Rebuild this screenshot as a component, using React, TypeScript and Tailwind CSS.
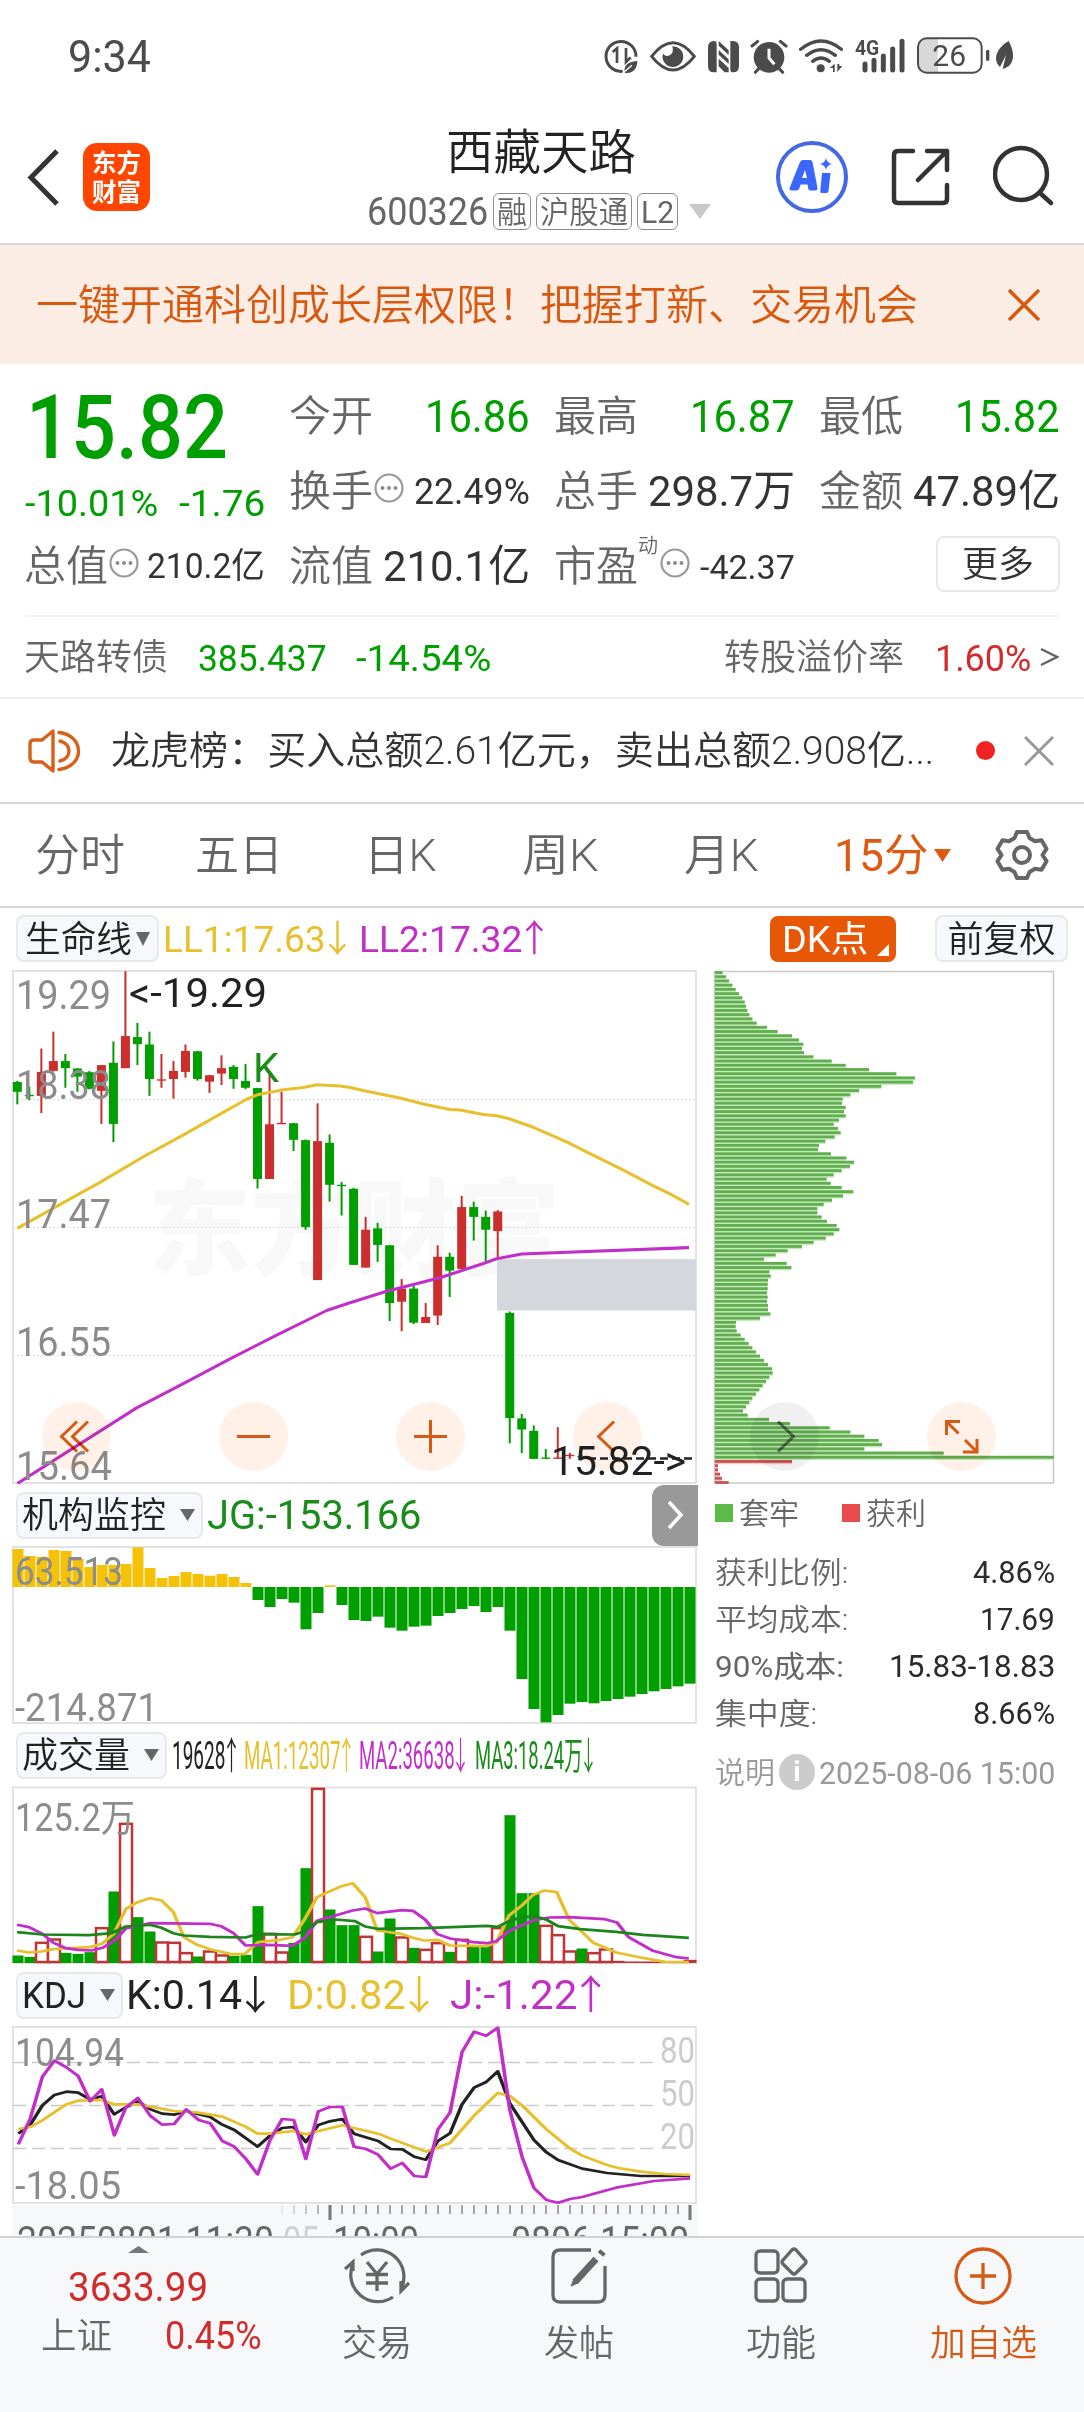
import { useLayoutEffect, useRef, useState, type ReactNode } from "react";

/* Single line of text, condensed or widened to fill the width of its box.
   Figures and Latin text are set one step heavier than Chinese labels. */
function Fit({ className = "", children }: { className?: string; children: ReactNode }) {
  const box = useRef<HTMLSpanElement>(null);
  const inner = useRef<HTMLSpanElement>(null);
  const [k, setK] = useState(1);
  useLayoutEffect(() => {
    if (box.current && inner.current && inner.current.offsetWidth) {
      setK(box.current.clientWidth / inner.current.offsetWidth);
    }
  }, [children]);
  const first = Array.isArray(children) ? children[0] : children;
  const latin = typeof first === "string" && /^[-\dA-Z]/.test(first);
  return (
    <span ref={box} className={`block shrink-0 whitespace-nowrap pt-[2px] leading-none ${className}`}>
      <span
        ref={inner}
        className={`inline-block origin-left align-top leading-none ${latin && !className.includes("font-") ? "font-normal" : ""}`}
        style={{ transform: `scaleX(${k})` }}
      >
        {children}
      </span>
    </span>
  );
}

/* Trend arrow after an indicator value, tightened to the width of a digit. */
function Arrow({ down }: { down?: boolean }) {
  return <span className="-ml-[0.18em] -mr-[0.2em] font-['Noto_Sans_CJK_SC'] leading-[0] font-[350]">{down ? "↓" : "↑"}</span>;
}

const GREEN = "#009f00";
const RED = "#cc2d2d";
const YELLOW = "#e8c02e";
const PURPLE = "#c22fc8";

function StatusBar() {
  return (
    <div className="flex h-[110px] shrink-0 items-start justify-between pl-[68px] pr-[65px] pt-[36px] text-[#4b4b4b]">
      <Fit className="mt-[-3px] w-[83px] text-[44px]">9:34</Fit>
      <svg className="h-[38px] w-[417px]" viewBox="66 48 1251 114" fill="#4b4b4b">
        <g fill="none" stroke="#4b4b4b" strokeWidth="9">
          <path d="M128 154a45 45 0 1 1 40-44" />
          <path d="M98 96l13-11v44M138 84v42l14-14" strokeWidth="8" />
        </g>
        <path d="M134 158c-4-24 14-34 38-35 0 22-14 40-38 35z" />
        <path d="M128 160l28-24" stroke="#fff" strokeWidth="4" />
        <path d="M215 109q64-82 128 0-64 82-128 0z" fill="none" stroke="#4b4b4b" strokeWidth="9" />
        <path d="M277 79a31 31 0 1 1-28 22q9 10 20 5 14-7 8-27z" />
        <path d="M402 63c6 0 8 4 8 8v86h-8q-18 0-18-20V83q0-20 18-20zM459 157c-6 0-8-4-8-8V63h8q18 0 18 20v54q0 20-18 20z" />
        <path d="M416 63l30 28v14l-30-28zM416 90l30 28v14l-30-28zM416 116l30 28v13h-12l-18-18z" />
        <circle cx="567" cy="112" r="46" />
        <path d="M567 86v28l16 19" fill="none" stroke="#fff" strokeWidth="9" />
        <path d="M516 78l17-14M618 78l-17-14M536 146l-10 11M598 146l10 11" stroke="#4b4b4b" strokeWidth="9" strokeLinecap="round" />
        <g fill="none" stroke="#4b4b4b" strokeWidth="10" strokeLinecap="round">
          <path d="M662 88q61-50 122 0M680 106q43-34 86 0M698 124q25-20 50 0" />
        </g>
        <circle cx="722" cy="145" r="12" />
        <path d="M749 144l15-13v25h-5v-12zM772 132v24l15-18h-9v-6z" />
        <text x="825" y="105" fontSize="62" fontWeight="700" textLength="73" lengthAdjust="spacingAndGlyphs">4G</text>
        <g stroke="#4b4b4b" strokeWidth="15" strokeLinecap="round">
          <path d="M855 132v18M882 121v29M910 108v42M938 87v63M966 64v86" />
        </g>
        <path d="M1074 57h-38q-20 0-20 20v60q0 20 20 20h38z" fill="#d8d8d8" />
        <rect x="1014" y="55" width="191" height="103" rx="26" fill="none" stroke="#4b4b4b" strokeWidth="6" />
        <text x="1057" y="138" fontSize="90" fontWeight="400" textLength="101" lengthAdjust="spacingAndGlyphs">26</text>
        <path d="M1223 94v24" stroke="#4b4b4b" strokeWidth="10" strokeLinecap="round" />
        <path d="M1286 63c20 36 20 74-18 84l10-42-18 36c-28-28 0-64 26-78z" />
      </svg>
    </div>
  );
}

function Tag({ children, className }: { children: ReactNode; className: string }) {
  return (
    <span className="flex h-[37px] items-center rounded-[6px] border-[1.5px] border-[#8c8c8c] px-[3px]">
      <Fit className={`text-[31px] ${className}`}>{children}</Fit>
    </span>
  );
}

function Header() {
  return (
    <header className="flex h-[135px] shrink-0 items-start border-b-2 border-[#d6d6d6]">
      <svg className="ml-[26px] mt-[39px] h-[57px] w-[35px]" viewBox="0 0 35 57" fill="none" stroke="#333" strokeWidth="5">
        <path d="M31 2L5 28.500L31 55" />
      </svg>
      <div className="ml-[22px] mt-[33px] flex h-[68px] w-[67px] flex-col items-center justify-center gap-[2px] rounded-[14px] bg-[#ff4500] text-[25px] font-bold text-white">
        <Fit className="w-[49px]">东方</Fit>
        <Fit className="w-[49px]">财富</Fit>
      </div>
      <div className="ml-[217px] flex w-[346px] flex-col items-center pt-[17px]">
        <Fit className="mr-[-2px] w-[190px] text-[48px] text-[#222]">西藏天路</Fit>
        <div className="mt-[14px] flex items-center gap-[5px] self-start text-[#666]">
          <Fit className="w-[121px] text-[38px]">600326</Fit>
          <Tag className="w-[30px]">融</Tag>
          <Tag className="w-[88px]">沪股通</Tag>
          <Tag className="w-[33px]">L2</Tag>
          <svg className="ml-[6px] h-[15px] w-[22px]" viewBox="0 0 22 15" fill="#c8c8c8"><path d="M0 0h22L11 15z" /></svg>
        </div>
      </div>
      <svg className="ml-[63px] mt-[31px] h-[72px] w-[72px]" viewBox="0 0 72 72">
        <circle cx="36" cy="36" r="34" fill="none" stroke="#4268e6" strokeWidth="4" />
        <path d="M24 21q1-2 3-2h7q2 0 2.500 2l5 26q0 2.500-2 2.500h-5q-2 0-2.300-2l-.6-4h-7l-1.300 4q-.7 2-3 2h-5q-2.500-.5-1.500-3zm5 8l-3 8h5z" fill="#3b67ff" fillRule="evenodd" />
        <path d="M46 32h8.500l-2 18q-.2 2-2 2h-4q-2.500 0-2.200-2zM50 17q1 5 6 6-5 1-6 6-1-5-6-6 5-1 6-6z" fill="#3b67ff" />
      </svg>
      <svg className="ml-[42px] mt-[37px] h-[60px] w-[60px]" viewBox="0 0 60 60" fill="none" stroke="#333" strokeWidth="4.500" strokeLinecap="round" strokeLinejoin="round">
        <path d="M23 4H8q-4 0-4 4v44q0 4 4 4h45q4 0 4-4V38M37 4h20v19M57 4L28 33" />
      </svg>
      <svg className="ml-[43px] mt-[35px] h-[64px] w-[64px]" viewBox="0 0 64 64" fill="none" stroke="#333" strokeWidth="4.500" strokeLinecap="round">
        <circle cx="28" cy="29" r="26" /><path d="M47 48l11 10" />
      </svg>
    </header>
  );
}

function Banner() {
  return (
    <div className="flex h-[119px] shrink-0 items-center justify-between bg-[#fcede4] pl-[36px] pr-[44px] text-[#d8580f]">
      <Fit className="w-[882px] text-[42px]">一键开通科创成长层权限！把握打新、交易机会</Fit>
      <svg className="size-[32px]" viewBox="0 0 32 32" stroke="currentColor" strokeWidth="3.500"><path d="M1 1l30 30M31 1L1 31" /></svg>
    </div>
  );
}

function Dots() {
  return (
    <svg className="mt-[-5px] size-[30px] shrink-0" viewBox="0 0 30 30">
      <circle cx="15" cy="15" r="13.500" fill="none" stroke="#999" strokeWidth="2.200" />
      <g fill="#8c8c8c"><circle cx="8.500" cy="15" r="2" /><circle cx="15" cy="15" r="2" /><circle cx="21.500" cy="15" r="2" /></g>
    </svg>
  );
}

function Cell({ label, mark, dots, value, className }: { label: string; mark?: string; dots?: boolean; value: string; className: string }) {
  return (
    <div className="flex h-[75px] items-center justify-between">
      <div className="relative flex items-center text-[42px] text-[#666]">
        <Fit className="ml-[-1px] w-[84px]">{label}</Fit>
        {mark && <span className="absolute left-[83px] top-[-8px] text-[20px] leading-none">{mark}</span>}
        {dots && <span className={mark ? "ml-[22px]" : "ml-px"}><Dots /></span>}
      </div>
      <Fit className={className}>{value}</Fit>
    </div>
  );
}

function Quote() {
  return (
    <section className="flex h-[335px] shrink-0 flex-col border-b-2 border-[#ededed] px-[25px] pt-[14px]">
      <div className="grid h-[237px] grid-cols-[240px_240px_240px_240px] grid-rows-[75px_75px_75px] gap-x-[25px]">
        <div className="row-span-2 flex flex-col pt-[3px] text-[#009f00]">
          <Fit className="ml-[1px] w-[202px] text-[89px] font-medium">15.82</Fit>
          <div className="mt-[11px] flex justify-between text-[37px]">
            <Fit className="w-[133px]">-10.01%</Fit>
            <Fit className="w-[86px]">-1.76</Fit>
          </div>
        </div>
        <Cell label="今开" value="16.86" className="w-[105px] text-[44px] text-[#009f00]" />
        <Cell label="最高" value="16.87" className="w-[105px] text-[44px] text-[#009f00]" />
        <Cell label="最低" value="15.82" className="w-[105px] text-[44px] text-[#009f00]" />
        <Cell label="换手" dots value="22.49%" className="w-[116px] text-[36px] text-[#333]" />
        <Cell label="总手" value="298.7万" className="w-[147px] text-[43px] text-[#333]" />
        <Cell label="金额" value="47.89亿" className="w-[147px] text-[43px] text-[#333]" />
        <Cell label="总值" dots value="210.2亿" className="w-[118px] text-[35px] text-[#333]" />
        <Cell label="流值" value="210.1亿" className="w-[147px] text-[43px] text-[#333]" />
        <Cell label="市盈" mark="动" dots value="-42.37" className="w-[95px] text-[34px] text-[#333]" />
        <div className="flex items-center justify-end pb-[3px]">
          <div className="flex h-[56px] w-[124px] items-center justify-center rounded-[8px] border-2 border-[#e8e8e8] text-[#333]">
            <Fit className="w-[72px] text-[36px]">更多</Fit>
          </div>
        </div>
      </div>
      <div className="flex h-[82px] items-center border-t-2 border-[#f3f3f3] text-[36px]">
        <Fit className="ml-[-1px] w-[144px] text-[#666]">天路转债</Fit>
        <Fit className="ml-[30px] w-[129px] text-[37px] text-[#009f00]">385.437</Fit>
        <Fit className="ml-[29px] w-[135px] text-[37px] text-[#009f00]">-14.54%</Fit>
        <Fit className="ml-auto w-[180px] text-[#666]">转股溢价率</Fit>
        <Fit className="ml-[31px] w-[96px] text-[37px] text-[#d02c2c]">1.60%</Fit>
        <svg className="ml-[9px] h-[20px] w-[19px]" viewBox="0 0 19 20" fill="none" stroke="#666" strokeWidth="2.500"><path d="M1 2l16 8-16 8" /></svg>
      </div>
    </section>
  );
}

function News() {
  return (
    <section className="flex h-[105px] shrink-0 items-center border-b-2 border-[#d6d6d6] pl-[28px] pr-[30px]">
      <svg className="h-[44px] w-[54px]" viewBox="0 0 54 44" fill="none" stroke="#d8611a" strokeWidth="3.400" strokeLinejoin="round">
        <path d="M25 2L14 11H6q-4 0-4 4v14q0 4 4 4h8l11 9z" />
        <path d="M31 3.500c26 3 26 34 0 37M32 12c12 3 12 17 0 20" strokeLinecap="round" />
      </svg>
      <Fit className="ml-[29px] w-[823px] text-[39px] text-[#333]">龙虎榜：买入总额2.61亿元，卖出总额2.908亿...</Fit>
      <span className="ml-[42px] size-[19px] rounded-full bg-[#f02222]" />
      <svg className="ml-auto size-[30px]" viewBox="0 0 30 30" stroke="#999" strokeWidth="3"><path d="M1 1l28 28M29 1L1 29" /></svg>
    </section>
  );
}

function Tabs() {
  return (
    <nav className="flex h-[104px] shrink-0 items-center border-b-2 border-[#d6d6d6] pl-[35px] text-[44px] text-[#666]">
      <Fit className="w-[90px]">分时</Fit>
      <Fit className="ml-[70px] w-[88px]">五日</Fit>
      <Fit className="ml-[81px] w-[73px]">日K</Fit>
      <Fit className="ml-[85px] w-[77px]">周K</Fit>
      <Fit className="ml-[85px] w-[75px]">月K</Fit>
      <Fit className="ml-[75px] w-[94px] text-[#dd5a10]">15分</Fit>
      <svg className="ml-[6px] h-[13px] w-[17px]" viewBox="0 0 17 13" fill="#dd5a10"><path d="M0 0h17L8.500 13z" /></svg>
      <svg className="ml-[44px] h-[52px] w-[54px]" viewBox="0 0 54 52" fill="none" stroke="#666" strokeWidth="4" strokeLinejoin="round">
        <path d="M22 3h10l2.500 6 5.500 3.200 6.500-1 5 8.600L47.500 26l4 6.200-5 8.600-6.500-1-5.500 3.200L32 49H22l-2.500-6-5.500-3.200-6.500 1-5-8.600 4-6.200-4-6.200 5-8.600 6.500 1L19.500 9z" />
        <circle cx="27" cy="26" r="8" />
      </svg>
    </nav>
  );
}

function Picker({ className, label, tight }: { className: string; label: string; tight?: boolean }) {
  return (
    <div className={`flex h-[47px] shrink-0 items-center rounded-[8px] border-2 border-[#e6e8ec] bg-[#f7f8fb] text-[36px] text-[#222] ${tight ? "pl-[7px] pr-[7px]" : "px-[4px]"}`}>
      <Fit className={className}>{label}</Fit>
      <svg className={tight ? "ml-[4px] h-[14px] w-[14px]" : "ml-[14px] mr-[2px] h-[12px] w-[15px]"} viewBox="0 0 15 12" preserveAspectRatio="none" fill="#666"><path d="M0 0h15L7.500 12z" /></svg>
    </div>
  );
}

/* x centre step is 12; each entry: colour, high, body top, body bottom, low */
const candles: [string, number, number, number, number][] = [
  ["g", 358, 361, 390, 427], ["g", 375, 399, 402, 415], ["r", 262, 331, 402, 453], ["r", 212, 299, 328, 330],
  ["g", 278, 299, 320, 378], ["g", 320, 321, 345, 390], ["g", 328, 332, 381, 383], ["r", 311, 311, 387, 485],
  ["g", 241, 304, 485, 539], ["r", 33, 225, 320, 320], ["g", 186, 228, 249, 311], ["g", 212, 250, 352, 402],
  ["r", 278, 353, 356, 378], ["r", 299, 328, 352, 410], ["r", 250, 269, 331, 348], ["g", 269, 270, 352, 357],
  ["r", 340, 341, 360, 393], ["r", 282, 320, 336, 370], ["g", 311, 316, 352, 381], ["g", 308, 358, 378, 382],
  ["g", 378, 379, 648, 676], ["r", 330, 486, 648, 648], ["r", 390, 482, 485, 485], ["g", 482, 483, 532, 565],
  ["g", 531, 533, 790, 798], ["r", 424, 536, 947, 947], ["g", 516, 541, 665, 715], ["g", 657, 665, 668, 756],
  ["g", 674, 677, 902, 902], ["r", 760, 798, 910, 910], ["g", 778, 794, 843, 893], ["g", 843, 844, 1015, 1068],
  ["r", 944, 972, 1011, 1098], ["g", 963, 972, 1073, 1077], ["r", 1015, 1056, 1074, 1074], ["r", 844, 878, 1052, 1080],
  ["g", 866, 878, 919, 997], ["r", 698, 731, 914, 914], ["g", 715, 731, 760, 830], ["g", 741, 760, 798, 893],
  ["r", 740, 744, 802, 885], ["g", 1040, 1044, 1355, 1430], ["g", 1343, 1356, 1389, 1459], ["g", 1377, 1393, 1476, 1476],
  ["g", 1447, 1472, 1475, 1475], ["r", 1382, 1472, 1475, 1475], ["r", 1458, 1464, 1467, 1476], ["g", 1463, 1468, 1472, 1476],
];

function AxisText({ x, y, w, children, fill = "#8c8c8c", size = 40 }: { x: number; y: number; w: number; children: string; fill?: string; size?: number }) {
  return (
    <text x={x} y={y} fontSize={size} fill={fill} fontWeight="400" textLength={w} lengthAdjust="spacingAndGlyphs">
      {children}
    </text>
  );
}

function PriceChart() {
  return (
    <svg className="block h-[514px] w-[686px] shrink-0" viewBox="12 970 686 514">
      <text x="148" y="1267" fontSize="104" fontWeight="900" fill="#f8f8f8" textLength="412" lengthAdjust="spacingAndGlyphs">东方财富</text>
      <rect x="13" y="971" width="683" height="512" fill="none" stroke="#e2e2e2" strokeWidth="2" />
      <path d="M13 1099.500H696M13 1227.500H696M13 1355.500H696" stroke="#ddd" strokeDasharray="2 2" />
      <g transform="translate(0 960) scale(.33333 .338)">
        {candles.map(([c, hi, top, bot, lo], i) => {
          const x = 52 + i * 36.03;
          const color = c === "g" ? GREEN : RED;
          return (
            <g key={i} fill={color}>
              <rect x={x - 3} y={hi} width="6" height={Math.max(lo - hi, 3)} />
              <rect x={x - 13.5} y={top} width="27" height={Math.max(bot - top, 4)} />
            </g>
          );
        })}
        <rect x="1491" y="885" width="597" height="152" fill="#d4d7dc" />
        <g fill="none" strokeWidth="9" strokeLinejoin="round">
          <path stroke={YELLOW} d="M52 794L190 718L300 658L430 582L560 512L680 445L740 412L772 399L850 384L910 377L950 369L1020 373L1050 377L1100 388L1200 408L1270 426L1350 442L1380 444L1450 457L1490 461L1525 469L1600 495L1700 538L1770 573L1870 622L1960 668L2010 692L2067 723" />
          <path stroke={PURPLE} d="M52 1549L410 1325L560 1248L690 1180L830 1110L980 1037L1050 1014L1160 980L1320 940L1450 898L1490 884L1565 870L2067 851" />
        </g>
      </g>
      <AxisText x={16} y={1009} w={95}>19.29</AxisText>
      <AxisText x={16} y={1098.500} w={95}>18.38</AxisText>
      <AxisText x={16} y={1228} w={95}>17.47</AxisText>
      <AxisText x={16} y={1356} w={95}>16.55</AxisText>
      <AxisText x={16} y={1480} w={96}>15.64</AxisText>
      <AxisText x={129} y={1007} w={138} fill="#222">{"<-19.29"}</AxisText>
      <AxisText x={253} y={1082} w={26} fill="#1a8c1a">K</AxisText>
      <path d="M588 1458.500H694" stroke="#222" strokeWidth="2.500" strokeDasharray="8 4" />
      <AxisText x={551} y={1475} w={135} fill="#222">{"15.82->"}</AxisText>
    </svg>
  );
}

const chips = [
  68, 78, 87, 97, 107, 117, 127, 134, 138, 142, 148, 157, 170, 201, 233, 276, 297, 310, 306, 312, 340, 395, 437, 507, 589,
  645, 639, 544, 477, 451, 428, 426, 437, 432, 437, 417, 401, 414, 422, 404, 376, 357, 354, 393, 439, 462, 450, 425, 401,
  380, 392, 425, 460, 429, 396, 371, 352, 352, 365, 381, 410, 418, 401, 377, 341, 306, 263, 227, 192, 260, 274, 208, 212,
  204, 203, 203, 201, 203, 201, 204, 204, 211, 180, 108, 107, 110, 122, 134, 146, 157, 168, 180, 192, 204, 216, 218, 208,
  198, 188, 178, 168, 157, 148, 138, 129, 143, 207, 270, 389, 451, 493, 536, 546, 493, 731, 1062, 276, 54, 54, 60, 66, 86,
];

function ChipChart() {
  return (
    <svg className="block h-[514px] w-[342px]" viewBox="713 970 342 514">
      <rect x="714.500" y="971.500" width="339" height="511.500" fill="none" stroke="#c8c8c8" strokeWidth="1.500" />
      {chips.map((x, i) => (
        <g key={i}>
          <rect x="715" y={971.1 + i * 4.215} width={(x - 45) / 3} height="4.200" fill={i > 115 ? "#f7c9c9" : "#c3ecb9"} />
          <rect x="715" y={971.1 + i * 4.215} width={(x - 45) / 3} height="2.800" fill={i > 115 ? "#c95454" : "#62ad50"} />
        </g>
      ))}
    </svg>
  );
}

const flow = [
  207, 228, 230, 210, 213, 237, 261, 255, 255, 252, 202, 264, 294, 288, 276, 282, 287, 282, 291, 309, 360, 381, 357, 368,
  448, 399, 316, 375, 420, 423, 410, 443, 452, 440, 437, 408, 399, 387, 378, 396, 381, 452, 597, 687, 727, 705, 671, 666,
  670, 663, 657, 650, 642, 634, 627, 619, 611,
];

function FlowChart() {
  return (
    <svg className="block h-[178px] w-[686px] shrink-0" viewBox="12 1546 686 178">
      <rect x="13" y="1547" width="683" height="176" fill="none" stroke="#e2e2e2" strokeWidth="2" />
      {flow.map((v, i) => {
        const y = 1480 + v / 3;
        return v < 321 ? (
          <rect key={i} x={12.5 + i * 12} y={y} width="11" height={1587 - y} fill="#f5c208" />
        ) : (
          <rect key={i} x={12.5 + i * 12} y="1587" width="11" height={y - 1587} fill={GREEN} />
        );
      })}
      <AxisText x={15} y={1585} w={108} size={38}>63.513</AxisText>
      <AxisText x={15} y={1721} w={143} size={38}>-214.871</AxisText>
    </svg>
  );
}

const volume: [string, number][] = [
  ["g", 555], ["g", 559], ["r", 514], ["r", 504], ["g", 547], ["g", 550], ["g", 545], ["r", 470], ["g", 363], ["r", 157],
  ["g", 440], ["g", 483], ["r", 513], ["r", 514], ["r", 545], ["g", 558], ["r", 540], ["r", 552], ["g", 556], ["g", 553],
  ["g", 407], ["r", 487], ["r", 543], ["g", 517], ["g", 293], ["r", 52], ["g", 417], ["g", 464], ["g", 464], ["r", 496],
  ["g", 543], ["g", 444], ["r", 498], ["g", 532], ["r", 535], ["r", 515], ["g", 544], ["r", 505], ["g", 525], ["g", 525],
  ["r", 470], ["g", 134], ["g", 368], ["g", 368], ["r", 463], ["r", 491], ["r", 540], ["g", 534], ["r", 545], ["r", 534],
  ["r", 571], ["r", 573], ["r", 573], ["r", 573], ["r", 573], ["r", 573], ["r", 568],
];

function VolumeChart() {
  return (
    <svg className="block h-[178px] w-[686px] shrink-0" viewBox="12 1785.500 686 178">
      <rect x="13" y="1787" width="683" height="175.500" fill="none" stroke="#e2e2e2" strokeWidth="2" />
      {volume.map(([c, v], i) => {
        const y = 1770 + v / 3;
        const h = 1962.5 - y;
        if (c === "g") return <rect key={i} x={12.5 + i * 12} y={y} width="11" height={h} fill={GREEN} />;
        if (h < 4) return <rect key={i} x={11.5 + i * 12} y={y} width="13" height={h} fill="#bf3434" />;
        return <rect key={i} x={12 + i * 12} y={y + 1} width="12" height={h - 2} fill="#fff" stroke="#bf3434" strokeWidth="2.500" />;
      })}
      <AxisText x={15} y={1830} w={120} size={38}>125.2万</AxisText>
      <g transform="translate(0 1770) scale(.44643 .33333)" fill="none" strokeWidth="8" strokeLinejoin="round">
        <path stroke={YELLOW} d="M38 540L65 546L92 543L120 536L200 530L228 520L255 490L282 415L308 395L335 383L362 390L388 424L412 500L440 522L470 536L520 551L548 551L578 515L628 508L655 500L683 445L710 380L765 347L790 338L818 380L845 480L900 490L925 502L950 510L980 508L1008 525L1090 527L1112 516L1140 435L1168 406L1194 373L1220 360L1247 365L1275 448L1302 482L1328 516L1380 546L1435 561L1490 574L1543 575" />
        <path stroke={PURPLE} d="M38 463L65 470L95 490L120 517L147 533L175 538L205 540L230 532L255 512L282 474L335 458L470 460L495 467L522 487L550 525L600 523L655 526L683 502L710 451L790 420L818 414L845 428L900 419L925 421L952 447L980 491L1008 504L1060 515L1090 518L1112 512L1140 482L1194 450L1230 441L1275 440L1355 446L1382 456L1408 500L1463 541L1515 560L1543 564" />
        <path stroke="#1c861c" d="M38 485L95 492L200 494L250 488L282 468L335 463L362 472L388 488L412 495L470 499L550 501L578 491L660 492L683 482L710 455L750 447L795 452L818 468L845 475L950 473L1090 466L1115 469L1140 452L1168 440L1200 438L1225 448L1250 467L1300 476L1380 484L1440 493L1543 502" />
      </g>
    </svg>
  );
}

function KdjChart() {
  return (
    <svg className="block h-[178px] w-[686px] shrink-0" viewBox="12 2026 686 178">
      <rect x="13" y="2027" width="683" height="176" fill="none" stroke="#e2e2e2" strokeWidth="2" />
      <path d="M13 2062.500H656M13 2105.500H656M13 2148.500H656" stroke="#ccc" strokeWidth="1.500" strokeDasharray="13 6" />
      <AxisText x={660} y={2062.500} w={35} size={36} fill="#ccc">80</AxisText>
      <AxisText x={660} y={2105.500} w={35} size={36} fill="#ccc">50</AxisText>
      <AxisText x={660} y={2148.500} w={35} size={36} fill="#ccc">20</AxisText>
      <AxisText x={15} y={2066} w={109} size={38}>104.94</AxisText>
      <AxisText x={15} y={2199} w={106} size={38}>-18.05</AxisText>
      <g transform="translate(0 1960) scale(.44643 .33333)" fill="none" strokeWidth="8" strokeLinejoin="round">
        <path stroke="#222" d="M41 521L68 494L95 436L122 405L149 395L175 398L202 418L228 409L256 463L282 442L309 424L337 448L363 461L390 464L417 454L471 471L498 494L525 510L577 560L605 527L632 504L658 501L685 546L713 495L739 484L767 477L793 521L847 543L875 567L901 568L928 590L954 599L981 543L1008 520L1035 433L1062 383L1089 366L1115 334L1142 430L1196 540L1224 577L1250 600L1304 626L1360 639L1435 648L1546 648" />
        <path stroke={YELLOW} d="M41 507L68 501L95 481L149 433L175 422L228 420L256 433L309 433L390 453L440 457L498 470L550 500L577 521L605 521L658 513L685 523L767 496L847 521L875 536L954 575L1008 549L1062 467L1115 399L1142 408L1170 437L1224 508L1277 566L1304 587L1360 615L1385 624L1435 635L1490 642L1546 645" />
        <path stroke={PURPLE} d="M41 553L68 475L95 350L122 302L149 322L175 348L202 424L228 388L256 526L282 442L309 414L337 468L363 494L390 492L417 448L445 480L471 490L498 543L525 560L551 597L577 643L605 540L632 477L658 480L685 597L713 454L739 441L767 441L793 560L820 567L847 584L875 626L901 609L928 648L954 651L981 508L1008 458L1035 276L1062 215L1089 227L1115 203L1142 450L1170 593L1196 684L1224 720L1250 728L1277 717L1304 711L1380 683L1465 663L1546 655" />
      </g>
    </svg>
  );
}

function TimeAxis() {
  return (
    <svg className="mt-px block h-[31px] w-[686px] shrink-0" viewBox="12 2205 686 31">
      <rect x="12" y="2205" width="686" height="31" fill="#f7f8fa" />
      {Array.from({ length: 35 }, (_, i) => {
        const big = i === 4 || i === 34;
        return (
          <rect key={i} x={282 + i * 12 - (big ? 1.5 : 0.75)} y="2205" width={big ? 3 : 1.5} height={big ? 15 : 9} fill={big ? "#777" : "#888"} opacity={i < 4 ? 0.2 + i * 0.2 : 1} />
        );
      })}
      <AxisText x={17} y={2254} w={257} size={38} fill="#666">20250801 11:30</AxisText>
      <AxisText x={283} y={2254} w={36} size={38} fill="#d0d0d0">05</AxisText>
      <AxisText x={333} y={2254} w={86} size={38} fill="#666">10:00</AxisText>
      <AxisText x={511} y={2254} w={178} size={38} fill="#666">0806 15:00</AxisText>
    </svg>
  );
}

function RoundButtons() {
  const shapes: [string, string, string][] = [
    ["bg-[#fff0e8]", "#d55a16", "M35 19.500L19.500 34.500L35 49.500M46 19.500L30.500 34.500L46 49.500"],
    ["bg-[#fff0e8]", "#d55a16", "M18 34.500H51"],
    ["bg-[#fff0e8]", "#d55a16", "M18 34.500H51M34.500 18V51"],
    ["bg-[#fff0e8]", "#d55a16", "M41 19.500L25.500 34.500L41 49.500"],
    ["bg-[#f0f0f0]", "#7d7d7d", "M28 19.500L43.500 34.500L28 49.500"],
    ["bg-[#fff0e8]", "#d55a16", "M33 19.500H19.500V33M19.500 19.500L31.500 31.500M50 37V50H36M50 50L38 38"],
  ];
  return (
    <div className="absolute left-[42px] top-[433px] flex gap-[108px] mix-blend-multiply">
      {shapes.map(([bg, color, d], i) => (
        <div key={i} className={`size-[69px] rounded-full ${bg}`}>
          <svg className="size-[69px]" viewBox="0 0 69 69" fill="none" stroke={color} strokeWidth="3"><path d={d} /></svg>
        </div>
      ))}
    </div>
  );
}

function StatRow({ label, lw, value, vw }: { label: string; lw: string; value: string; vw: string }) {
  return (
    <div className="flex h-[47px] items-center justify-between">
      <Fit className={`text-[30px] text-[#666] ${lw}`}>{label}</Fit>
      <Fit className={`text-[31px] text-[#2b2b2b] ${vw}`}>{value}</Fit>
    </div>
  );
}

function Charts() {
  return (
    <main className="relative flex h-[1328px] shrink-0 flex-col overflow-hidden">
      <div className="flex h-[61px] shrink-0 items-center pl-[16px] pr-[16px]">
        <Picker label="生命线" className="w-[107px]" tight />
        <Fit className="ml-[4px] w-[186px] text-[37px] text-[#e8c02e]">LL1:17.63<Arrow down /></Fit>
        <Fit className="ml-[10px] w-[187px] text-[37px] text-[#c22fc8]">LL2:17.32<Arrow /></Fit>
        <div className="relative ml-auto flex h-[46px] w-[126px] items-center rounded-[8px] bg-[#e85706] pl-[12px] text-white">
          <Fit className="w-[86px] text-[36px]">DK点</Fit>
          <svg className="absolute bottom-[6px] right-[7px] size-[12px]" viewBox="0 0 12 12" fill="#fff"><path d="M12 0v12H0z" /></svg>
        </div>
        <div className="ml-[39px] flex h-[47px] w-[133px] items-center justify-center rounded-[8px] border-2 border-[#e6e8ec] bg-[#f7f8fb] text-[#222]">
          <Fit className="w-[108px] text-[36px]">前复权</Fit>
        </div>
      </div>
      <div className="relative flex grow pl-[12px] pt-px">
        <div className="flex w-[686px] flex-col">
          <PriceChart />
          <div className="flex h-[62px] shrink-0 items-center pl-[4px]">
            <Picker label="机构监控" className="w-[144px]" />
            <Fit className="ml-[4px] w-[215px] text-[40px] text-[#1a8c1a]">JG:-153.166</Fit>
            <div className="ml-auto flex h-[61px] w-[46px] items-center justify-center rounded-l-[12px] bg-[#999]">
              <svg className="h-[30px] w-[18px]" viewBox="0 0 18 30" fill="none" stroke="#fff" strokeWidth="3.500"><path d="M3 2l12 13L3 28" /></svg>
            </div>
          </div>
          <FlowChart />
          <div className="flex h-[62px] shrink-0 items-center pl-[4px] text-[38px]">
            <Picker label="成交量" className="w-[108px]" />
            <Fit className="ml-[5px] w-[65px] text-[#222]">19628<Arrow /></Fit>
            <Fit className="ml-[7px] w-[108px] text-[#e8c02e]">MA1:12307<Arrow /></Fit>
            <Fit className="ml-[7px] w-[107px] text-[#c22fc8]">MA2:36638<Arrow down /></Fit>
            <Fit className="ml-[9px] w-[119px] text-[#1a8c1a]">MA3:18.24万<Arrow down /></Fit>
          </div>
          <VolumeChart />
          <div className="flex h-[62px] shrink-0 items-center pl-[4px] text-[40px]">
            <Picker label="KDJ" className="w-[64px]" />
            <Fit className="ml-[3px] w-[142px] text-[#222]">K:0.14<Arrow down /></Fit>
            <Fit className="ml-[19px] w-[145px] text-[#e8c02e]">D:0.82<Arrow down /></Fit>
            <Fit className="ml-[18px] w-[154px] text-[#c22fc8]">J:-1.22<Arrow /></Fit>
          </div>
          <KdjChart />
          <TimeAxis />
        </div>
        <div className="ml-[15px] w-[342px]">
          <ChipChart />
          <div className="flex h-[57px] items-center pl-[2px] text-[30px] text-[#666]">
            <span className="size-[18px] bg-[#5cba47]" />
            <Fit className="ml-[6px] w-[60px]">套牢</Fit>
            <span className="ml-[43px] size-[18px] bg-[#e84b4b]" />
            <Fit className="ml-[6px] w-[60px]">获利</Fit>
          </div>
          <div className="pl-[2px] pt-[7px]">
            <StatRow label="获利比例:" lw="w-[133px]" value="4.86%" vw="w-[82px]" />
            <StatRow label="平均成本:" lw="w-[133px]" value="17.69" vw="w-[75px]" />
            <StatRow label="90%成本:" lw="w-[129px]" value="15.83-18.83" vw="w-[166px]" />
            <StatRow label="集中度:" lw="w-[102px]" value="8.66%" vw="w-[82px]" />
          </div>
          <div className="mt-[13px] flex h-[46px] items-center justify-between pl-[2px] text-[30px] text-[#999]">
            <Fit className="w-[60px]">说明</Fit>
            <span className="flex size-[36px] items-center justify-center rounded-full bg-[#ccc] text-[28px] font-bold leading-none text-white">i</span>
            <Fit className="w-[236px] text-[31px]">2025-08-06 15:00</Fit>
          </div>
        </div>
        <RoundButtons />
      </div>
    </main>
  );
}

function NavItem({ label, accent, children }: { label: string; accent?: boolean; children: ReactNode }) {
  return (
    <div className={`flex w-[202px] flex-col items-center pt-[8px] ${accent ? "text-[#d55a16]" : "text-[#666]"}`}>
      <svg className="h-[60px] w-[66px]" viewBox="0 0 66 60" fill="none" stroke="currentColor" strokeWidth="3.300">{children}</svg>
      <Fit className={`mt-[18px] text-[36px] ${accent ? "w-[107px]" : "w-[70px]"}`}>{label}</Fit>
    </div>
  );
}

function BottomNav() {
  return (
    <footer className="flex h-[176px] shrink-0 border-t-2 border-[#d2d2d4] bg-[#f7f8fa]">
      <div className="flex w-[276px] flex-col items-center pt-[8px] text-[#d02c2c]">
        <svg className="h-[7px] w-[21px]" viewBox="0 0 21 7" fill="#777"><path d="M0 7h21L10.500 0z" /></svg>
        <Fit className="mt-[12px] w-[140px] text-[41px]">3633.99</Fit>
        <div className="ml-[26px] mt-[7px] flex w-[221px] items-center justify-between">
          <Fit className="w-[71px] text-[36px] text-[#666]">上证</Fit>
          <Fit className="w-[97px] text-[39px]">0.45%</Fit>
        </div>
      </div>
      <NavItem label="交易">
        <path d="M17 9a27 27 0 0 1 40 34M49 51A27 27 0 0 1 9 18M1 23l8-7v9M65 37l-8 8v-10" />
        <path d="M23 16l10 12 10-12M33 28v17M22 28.500h22M22 37h22" />
      </NavItem>
      <NavItem label="发帖">
        <path d="M45 4H14q-7 0-7 7v38q0 7 7 7h38q7 0 7-7V20" />
        <path d="M29 36L50 13M54.500 8.500L57 5.500" strokeWidth="7" /><path d="M25 40l7-3-4-4z" fill="currentColor" strokeWidth="1" />
      </NavItem>
      <NavItem label="功能">
        <rect x="8" y="5" width="22" height="22" rx="4" /><rect x="8" y="33" width="22" height="22" rx="4" /><rect x="35" y="33" width="22" height="22" rx="4" />
        <path d="M44 4q2-2 4 0l9 10q2 2 0 4l-9 9q-2 2-4 0l-9-9q-2-2 0-4z" />
      </NavItem>
      <NavItem label="加自选" accent>
        <circle cx="33" cy="30" r="27" /><path d="M20 30h26M33 17v26" />
      </NavItem>
    </footer>
  );
}

export default function App() {
  return (
    <div className="flex h-[2412px] w-[1084px] flex-col overflow-hidden bg-white font-[Roboto,'Liberation_Sans','Noto_Sans_CJK_SC',sans-serif] font-[350]">
      <StatusBar />
      <Header />
      <Banner />
      <Quote />
      <News />
      <Tabs />
      <Charts />
      <BottomNav />
    </div>
  );
}
